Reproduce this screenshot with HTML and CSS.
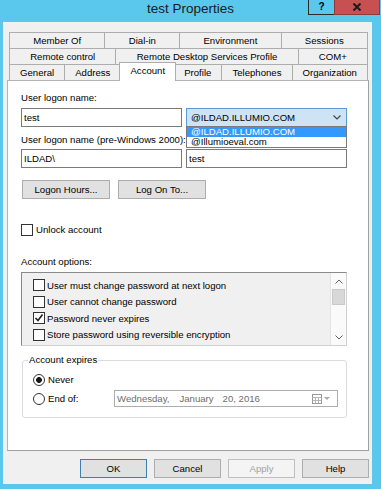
FILE: index.html
```html
<!DOCTYPE html>
<html lang="en">
<head>
    <meta charset="utf-8">
    <title>test Properties</title>
    <link rel="stylesheet" href="styles.css">
</head>
<body>
<div class="window">
    <div class="titlebar">
        <h1>test Properties</h1>
        <div class="caption">
            <span class="cap-help">?</span>
            <span class="cap-close">
                <svg width="10" height="8" viewBox="0 0 10 8"><path d="M1.5 0.5 L8.5 7.5 M8.5 0.5 L1.5 7.5" stroke="#1b1b1b" stroke-width="2"/></svg>
            </span>
        </div>
    </div>

    <div class="client">
        <div class="tabs">
            <div class="tab-row">
                <span class="tab">Member Of</span>
                <span class="tab">Dial-in</span>
                <span class="tab">Environment</span>
                <span class="tab">Sessions</span>
            </div>
            <div class="tab-row">
                <span class="tab">Remote control</span>
                <span class="tab">Remote Desktop Services Profile</span>
                <span class="tab">COM+</span>
            </div>
            <div class="tab-row">
                <span class="tab">General</span>
                <span class="tab">Address</span>
                <span class="tab active">Account</span>
                <span class="tab">Profile</span>
                <span class="tab">Telephones</span>
                <span class="tab">Organization</span>
            </div>
        </div>

        <div class="panel">
            <p class="label">User logon name:</p>
            <div class="field-row">
                <div class="textbox">test</div>
                <div class="combo">
                    <span>@ILDAD.ILLUMIO.COM</span>
                    <svg width="8" height="5" viewBox="0 0 8 5"><polyline points="0.5,0.5 4,4 7.5,0.5" fill="none" stroke="#444" stroke-width="1.2"/></svg>
                    <ul class="dropdown">
                        <li class="selected">@ILDAD.ILLUMIO.COM</li>
                        <li>@Illumioeval.com</li>
                    </ul>
                </div>
            </div>

            <p class="label label-pre">User logon name (pre-Windows 2000):</p>
            <div class="field-row field-pre">
                <div class="textbox">ILDAD\</div>
                <div class="textbox">test</div>
            </div>

            <div class="btn-row">
                <button class="btn wide">Logon Hours...</button>
                <button class="btn wide">Log On To...</button>
            </div>

            <div class="check unlock"><span class="box"></span>Unlock account</div>

            <p class="label options-label">Account options:</p>
            <div class="listbox">
                <ul class="options">
                    <li class="check"><span class="box"></span>User must change password at next logon</li>
                    <li class="check"><span class="box"></span>User cannot change password</li>
                    <li class="check"><span class="box"><svg width="10" height="10" viewBox="0 0 10 10"><polyline points="1.5,5 4,7.5 8.5,1.5" fill="none" stroke="#222" stroke-width="1.6"/></svg></span>Password never expires</li>
                    <li class="check"><span class="box"></span>Store password using reversible encryption</li>
                </ul>
                <div class="scrollbar">
                    <span class="arrow"><svg width="8" height="5" viewBox="0 0 8 5"><polyline points="0.5,4.5 4,1 7.5,4.5" fill="none" stroke="#606060"/></svg></span>
                    <span class="thumb"></span>
                    <span class="track"></span>
                    <span class="arrow"><svg width="8" height="5" viewBox="0 0 8 5"><polyline points="0.5,0.5 4,4 7.5,0.5" fill="none" stroke="#606060"/></svg></span>
                </div>
            </div>

            <fieldset class="expires">
                <legend>Account expires</legend>
                <div class="radio-row"><span class="radio on"></span>Never</div>
                <div class="radio-row">
                    <span class="radio"></span><span class="end-label">End of:</span>
                    <div class="datepicker">
                        <span class="day">Wednesday,</span>
                        <span class="month">January</span>
                        <span>20, 2016</span>
                        <svg class="cal" width="20" height="10" viewBox="0 0 20 10">
                            <rect x="0.5" y="0.5" width="9" height="9" fill="#fff" stroke="#999"/>
                            <path d="M0.5 3.5 H9.5 M0.5 6.5 H9.5 M3.5 3.5 V9.5 M6.5 3.5 V9.5" stroke="#b5b5b5"/>
                            <polygon points="12,3 18,3 15,6" fill="#aaa"/>
                        </svg>
                    </div>
                </div>
            </fieldset>
        </div>

        <div class="footer">
            <button class="btn default">OK</button>
            <button class="btn">Cancel</button>
            <button class="btn" disabled>Apply</button>
            <button class="btn">Help</button>
        </div>
    </div>
</div>
</body>
</html>
```

FILE: styles.css
```css
* {
    margin: 0;
    padding: 0;
    box-sizing: border-box;
}

body {
    width: 381px;
    height: 489px;
    overflow: hidden;
    background: #5ac8ec;
    color: #000;
    font: 9.6px "Liberation Sans", Arial, sans-serif;
}

.window {
    display: flex;
    flex-direction: column;
    height: 489px;
}

/* title bar */
.titlebar {
    height: 22px;
    display: grid;
    grid-template-columns: 1fr auto 1fr;
}

.titlebar h1 {
    grid-column: 2;
    font-size: 13.5px;
    font-weight: normal;
    line-height: 18px;
    color: #1a1a1a;
}

.caption {
    grid-column: 3;
    justify-self: end;
    display: flex;
    align-items: flex-start;
    margin-right: 1px;
}

.cap-help {
    width: 26px;
    height: 15px;
    border: 1px solid #2b2b2b;
    border-top: 0;
    border-right: 0;
    text-align: center;
    font: bold 10px/14px "Liberation Sans", Arial, sans-serif;
}

.cap-close {
    width: 46px;
    height: 15px;
    background: #c75050;
    border: 1px solid #8f3b3b;
    border-top: 0;
    display: flex;
    align-items: center;
    justify-content: center;
}

/* client area */
.client {
    flex: 1;
    margin: 0 9px 5px 3px;
    padding: 10px 3px 0 4px;
    background: #f0f0f0;
}

.tabs {
    margin: 0 1px 0 2px;
}

.tab-row {
    display: flex;
    height: 16px;
}

.tab {
    flex: 1 1 auto;
    height: 16px;
    margin-left: -1px;
    border: 1px solid #adadad;
    border-bottom: 0;
    background: #f0f0f0;
    text-align: center;
    line-height: 15px;
    white-space: nowrap;
}

.tab:first-child {
    margin-left: 0;
}

.tab.active {
    position: relative;
    z-index: 2;
    height: 19px;
    margin: -2px -2px -1px;
    background: #fff;
    line-height: 15px;
}

.panel {
    height: 371px;
    border: 1px solid #b4b4b4;
    border-right-color: #a0a0a0;
    border-bottom-color: #a0a0a0;
    background: #fff;
    padding: 11px 0 0 13px;
}

.label {
    line-height: 12px;
}

.field-row {
    display: flex;
    gap: 4px;
    margin-top: 4px;
}

.textbox, .combo {
    width: 161px;
    height: 19px;
    border: 1px solid #7a7a7a;
    padding-left: 2px;
    line-height: 17px;
    background: #fff;
}

.combo {
    position: relative;
    display: flex;
    align-items: center;
    justify-content: space-between;
    padding: 0 5px 0 4px;
    border-color: #5b9bd5;
    background: #cde4f7;
}

.dropdown {
    position: absolute;
    z-index: 5;
    top: 17px;
    left: -1px;
    width: 161px;
    border: 1px solid #7a7a7a;
    background: #fff;
    list-style: none;
}

.dropdown li {
    height: 10px;
    line-height: 10px;
    padding-left: 4px;
}

.dropdown li.selected {
    background: #3399ff;
    color: #fff;
}

.label-pre {
    margin-top: 7px;
}

.field-pre {
    margin-top: 3px;
}

.btn-row {
    display: flex;
    gap: 8px;
    margin: 12px 0 0 1px;
}

.btn {
    width: 67px;
    height: 19px;
    border: 1px solid #adadad;
    background: #e1e1e1;
    font: inherit;
    color: #000;
    line-height: 17px;
    text-align: center;
}

.btn.wide {
    width: 88px;
}

.btn.default {
    border-color: #3c7fb1;
}

.btn:disabled {
    background: #f4f4f4;
    border-color: #bfbfbf;
    color: #a3a3a3;
}

.check {
    display: flex;
    align-items: center;
    gap: 2px;
}

.box {
    width: 12px;
    height: 12px;
    border: 1px solid #333;
    background: #fff;
    display: flex;
    align-items: center;
    justify-content: center;
}

.unlock {
    margin-top: 25px;
    gap: 3px;
    line-height: 12px;
}

.options-label {
    margin-top: 20px;
}

.listbox {
    display: flex;
    width: 326px;
    height: 74px;
    margin-top: 4px;
    border: 1px solid #8a8a8a;
    border-right-color: #d0d0d0;
    border-bottom-color: #d0d0d0;
    background: #f0f0f0;
}

.options {
    flex: 1;
    list-style: none;
    padding: 4px 0 0 11px;
}

.options li {
    height: 16.5px;
}

.scrollbar {
    width: 16px;
    display: flex;
    flex-direction: column;
    background: #fafafa;
    border-left: 1px solid #e3e3e3;
}

.scrollbar .arrow {
    height: 16px;
    display: flex;
    align-items: center;
    justify-content: center;
}

.scrollbar .thumb {
    height: 16px;
    margin: 0 1px;
    background: #d8d8d8;
    border: 1px solid #c8c8c8;
}

.scrollbar .track {
    flex: 1;
}

/* account expires */
.expires {
    width: 325px;
    margin: 8px 0 0 1px;
    padding: 0 0 10px 5px;
    border: 1px solid #dcdcdc;
    border-radius: 3px;
}

.expires legend {
    padding: 0 1px;
    line-height: 12px;
}

.radio-row {
    display: flex;
    align-items: center;
    height: 17px;
    padding-left: 5px;
    margin-top: 5px;
    gap: 3px;
}

.radio-row + .radio-row {
    margin-top: 2px;
}

.radio {
    width: 12px;
    height: 12px;
    border: 1px solid #333;
    border-radius: 50%;
    background: #fff;
}

.radio.on {
    background: radial-gradient(circle, #1a1a1a 2.6px, #fff 3.2px);
}

.end-label {
    width: 63px;
}

.datepicker {
    display: flex;
    align-items: center;
    width: 224px;
    height: 17px;
    padding: 0 5px 0 2px;
    border: 1px solid #adadad;
    background: #fff;
    color: #6d6d6d;
}

.datepicker .day {
    margin-right: 10px;
}

.datepicker .month {
    margin-right: 9px;
}

.datepicker .cal {
    margin-left: auto;
}

.footer {
    display: flex;
    justify-content: flex-end;
    gap: 7px;
    margin-top: 8px;
}
```
